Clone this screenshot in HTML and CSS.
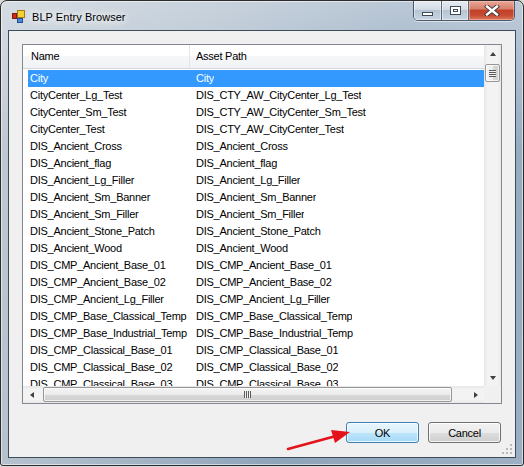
FILE: index.html
```html
<!DOCTYPE html>
<html>
<head>
<meta charset="utf-8">
<title>BLP Entry Browser</title>
<link rel="stylesheet" href="styles.css">
</head>
<body>
<div class="window">
  <div class="titlebar">
    <svg class="app-icon" width="15" height="14" viewBox="0 0 15 14">
      <rect x="1.5" y="3.5" width="4" height="5" fill="#d8261c" stroke="#7a1a12"/>
      <rect x="6.5" y="0.5" width="7" height="7" fill="#f7cf2e" stroke="#a07a10"/>
      <rect x="6.5" y="8.5" width="5" height="4" fill="#4f86d8" stroke="#1f4f9a"/>
    </svg>
    <span class="title">BLP Entry Browser</span>
    <div class="caption">
      <div class="cbtn min"><span class="min-glyph"></span></div>
      <div class="cbtn max"><span class="max-glyph"></span></div>
      <div class="cbtn close">
        <svg width="16" height="11" viewBox="0 0 16 11">
          <path d="M3 1.5 L13 9.5 M13 1.5 L3 9.5" stroke="#3a3a3a" stroke-width="4.2" stroke-linecap="square"/>
          <path d="M3 1.5 L13 9.5 M13 1.5 L3 9.5" stroke="#ffffff" stroke-width="2.4" stroke-linecap="square"/>
        </svg>
      </div>
    </div>
  </div>
  <div class="client">
    <div class="listview">
      <div class="lv-main">
        <div class="lv-header">
          <div class="hcol hc1">Name</div>
          <div class="hcol hc2">Asset Path</div>
        </div>
        <div class="lv-rows">
          <div class="row selected"><span class="c1">City</span><span class="c2">City</span></div>
          <div class="row"><span class="c1">CityCenter_Lg_Test</span><span class="c2">DIS_CTY_AW_CityCenter_Lg_Test</span></div>
          <div class="row"><span class="c1">CityCenter_Sm_Test</span><span class="c2">DIS_CTY_AW_CityCenter_Sm_Test</span></div>
          <div class="row"><span class="c1">CityCenter_Test</span><span class="c2">DIS_CTY_AW_CityCenter_Test</span></div>
          <div class="row"><span class="c1">DIS_Ancient_Cross</span><span class="c2">DIS_Ancient_Cross</span></div>
          <div class="row"><span class="c1">DIS_Ancient_flag</span><span class="c2">DIS_Ancient_flag</span></div>
          <div class="row"><span class="c1">DIS_Ancient_Lg_Filler</span><span class="c2">DIS_Ancient_Lg_Filler</span></div>
          <div class="row"><span class="c1">DIS_Ancient_Sm_Banner</span><span class="c2">DIS_Ancient_Sm_Banner</span></div>
          <div class="row"><span class="c1">DIS_Ancient_Sm_Filler</span><span class="c2">DIS_Ancient_Sm_Filler</span></div>
          <div class="row"><span class="c1">DIS_Ancient_Stone_Patch</span><span class="c2">DIS_Ancient_Stone_Patch</span></div>
          <div class="row"><span class="c1">DIS_Ancient_Wood</span><span class="c2">DIS_Ancient_Wood</span></div>
          <div class="row"><span class="c1">DIS_CMP_Ancient_Base_01</span><span class="c2">DIS_CMP_Ancient_Base_01</span></div>
          <div class="row"><span class="c1">DIS_CMP_Ancient_Base_02</span><span class="c2">DIS_CMP_Ancient_Base_02</span></div>
          <div class="row"><span class="c1">DIS_CMP_Ancient_Lg_Filler</span><span class="c2">DIS_CMP_Ancient_Lg_Filler</span></div>
          <div class="row"><span class="c1">DIS_CMP_Base_Classical_Temp</span><span class="c2">DIS_CMP_Base_Classical_Temp</span></div>
          <div class="row"><span class="c1">DIS_CMP_Base_Industrial_Temp</span><span class="c2">DIS_CMP_Base_Industrial_Temp</span></div>
          <div class="row"><span class="c1">DIS_CMP_Classical_Base_01</span><span class="c2">DIS_CMP_Classical_Base_01</span></div>
          <div class="row"><span class="c1">DIS_CMP_Classical_Base_02</span><span class="c2">DIS_CMP_Classical_Base_02</span></div>
          <div class="row"><span class="c1">DIS_CMP_Classical_Base_03</span><span class="c2">DIS_CMP_Classical_Base_03</span></div>
        </div>
      </div>
      <div class="vscroll">
        <div class="sbtn"><span class="tri up"></span></div>
        <div class="vthumb"><span class="vgrip"></span></div>
        <div class="vtrack"></div>
        <div class="sbtn"><span class="tri down"></span></div>
      </div>
      <div class="hscroll">
        <div class="sbtn"><span class="tri left"></span></div>
        <div class="hthumb"><span class="hgrip"></span></div>
        <div class="htrack"></div>
        <div class="sbtn"><span class="tri right"></span></div>
      </div>
      <div class="corner"></div>
    </div>
    <div class="buttons">
      <button class="btn ok">OK</button>
      <button class="btn">Cancel</button>
    </div>
    <svg class="arrow" width="90" height="36" viewBox="0 0 90 36">
      <path d="M18 27 L66 14" stroke="#e4121b" stroke-width="2.6" stroke-linecap="round"/>
      <polygon points="80,10 61,8 65,21" fill="#e4121b"/>
    </svg>
    <svg class="grip" width="11" height="11" viewBox="0 0 11 11">
      <g fill="#b9b9b9">
        <rect x="8" y="0" width="2" height="2"/>
        <rect x="4" y="4" width="2" height="2"/>
        <rect x="8" y="4" width="2" height="2"/>
        <rect x="0" y="8" width="2" height="2"/>
        <rect x="4" y="8" width="2" height="2"/>
        <rect x="8" y="8" width="2" height="2"/>
      </g>
    </svg>
  </div>
</div>
</body>
</html>
```

FILE: styles.css
```css
* { box-sizing: border-box; }
html, body { margin: 0; padding: 0; }
body {
  width: 524px;
  height: 467px;
  overflow: hidden;
  background: #d9d9d9;
  font-family: "Liberation Sans", Arial, sans-serif;
  font-size: 11px;
  color: #000;
}

.window {
  width: 524px;
  height: 466px;
  border: 1px solid #2c2c2c;
  border-radius: 7px 7px 3px 3px;
  background:
    linear-gradient(to bottom, rgba(230, 236, 242, 0.5) 0, rgba(230, 236, 242, 0) 150px),
    linear-gradient(105deg, #c4ccd5 0%, #adbbc9 30%, #8ea4bb 62%, #9cafc3 100%);
  box-shadow: inset 0 0 0 1px rgba(255, 255, 255, 0.55);
  display: flex;
  flex-direction: column;
}

/* Title bar */
.titlebar {
  height: 29px;
  display: flex;
  align-items: center;
  padding-left: 10px;
}
.app-icon { flex: none; margin-top: 2px; }
.title {
  margin-left: 6px;
  margin-top: 2px;
  font-size: 11px;
  letter-spacing: 0.05px;
  color: #000;
  text-shadow: 0 0 6px #fff, 0 0 10px #fff, 0 0 14px rgba(255, 255, 255, 0.9);
}
.caption {
  margin-left: auto;
  margin-right: 8px;
  align-self: flex-start;
  display: flex;
  height: 20px;
  border: 1px solid #4a5a6c;
  border-top: none;
  border-radius: 0 0 5px 5px;
  overflow: hidden;
  box-shadow: 0 1px 0 rgba(255, 255, 255, 0.5);
}
.cbtn {
  display: flex;
  align-items: center;
  justify-content: center;
  height: 100%;
}
.cbtn.min, .cbtn.max {
  background: linear-gradient(to bottom, #e6ebf1 0%, #d2dbe5 45%, #b6c4d3 50%, #c8d4e0 100%);
  border-right: 1px solid #5a6a7c;
  box-shadow: inset 0 0 0 1px rgba(255, 255, 255, 0.45);
}
.cbtn.min { width: 28px; }
.cbtn.max { width: 27px; }
.cbtn.close {
  width: 45px;
  background: linear-gradient(to bottom, #e8a797 0%, #d9806b 40%, #c2412a 50%, #c74a30 75%, #dd7a5e 100%);
  box-shadow: inset 0 0 0 1px rgba(255, 210, 200, 0.45);
}
.min-glyph {
  width: 11px;
  height: 4px;
  margin-top: 6px;
  background: #fff;
  border: 1px solid #3e4a58;
}
.max-glyph {
  width: 11px;
  height: 9px;
  border: 1px solid #3e4a58;
  background: #fff;
  box-shadow: inset 0 0 0 2px #fff, inset 0 0 0 3px #3e4a58;
}

/* Client */
.client {
  flex: 1;
  margin: 0 7px 7px 7px;
  border: 1px solid #3e4b59;
  background: #f0f0f0;
  padding: 13px 13px 0 13px;
  position: relative;
  display: flex;
  flex-direction: column;
}

.listview {
  height: 360px;
  border: 1px solid #828790;
  background: #fff;
  display: grid;
  grid-template-columns: 1fr 17px;
  grid-template-rows: 1fr 17px;
}
.lv-main {
  overflow: hidden;
  min-width: 0;
  min-height: 0;
}
.lv-header {
  height: 24px;
  display: flex;
  background: linear-gradient(to bottom, #ffffff 0%, #ffffff 45%, #f6f7f9 50%, #f1f2f4 100%);
  border-bottom: 1px solid #d5d5d5;
}
.hcol {
  line-height: 23px;
  letter-spacing: -0.25px;
  white-space: nowrap;
}
.hc1 {
  width: 167px;
  padding-left: 8px;
  border-right: 1px solid #e2e5ea;
}
.hc2 { padding-left: 6px; }

.lv-rows { padding-top: 1px; }
.row {
  display: flex;
  height: 17px;
  line-height: 17px;
  margin-left: 5px;
  white-space: nowrap;
  letter-spacing: -0.25px;
}
.row.selected {
  background: #3399ff;
  color: #fff;
}
.c1 {
  width: 162px;
  padding-left: 2px;
  overflow: hidden;
  flex: none;
}
.c2 {
  padding-left: 6px;
  overflow: hidden;
}

/* Scrollbars */
.vscroll {
  display: flex;
  flex-direction: column;
  background: linear-gradient(to right, #e6e6e6 0%, #f3f3f3 20%, #f3f3f3 80%, #e9e9e9 100%);
}
.hscroll {
  display: flex;
  background: linear-gradient(to bottom, #e6e6e6 0%, #f3f3f3 20%, #f3f3f3 80%, #e9e9e9 100%);
}
.corner { background: #f0f0f0; }
.sbtn {
  width: 17px;
  height: 17px;
  flex: none;
  display: flex;
  align-items: center;
  justify-content: center;
}
.vtrack, .htrack { flex: 1; }
.tri { width: 0; height: 0; border-style: solid; }
.tri.up { border-width: 0 3.5px 4px 3.5px; border-color: transparent transparent #404040 transparent; }
.tri.down { border-width: 4px 3.5px 0 3.5px; border-color: #404040 transparent transparent transparent; }
.tri.left { border-width: 3.5px 4px 3.5px 0; border-color: transparent #404040 transparent transparent; }
.tri.right { border-width: 3.5px 0 3.5px 4px; border-color: transparent transparent transparent #404040; }

.vthumb {
  margin: 2px 1px 0 1px;
  height: 18px;
  flex: none;
  border: 1px solid #979797;
  border-radius: 2px;
  background: linear-gradient(to right, #f4f4f4 0%, #ececec 50%, #d8d8d8 51%, #cfcfcf 100%);
  box-shadow: inset 0 0 0 1px rgba(255, 255, 255, 0.7);
  display: flex;
  align-items: center;
  justify-content: center;
}
.vgrip {
  width: 7px;
  height: 7px;
  background: repeating-linear-gradient(to bottom, #5c5c5c 0, #5c5c5c 1px, #f0f0f0 1px, #f0f0f0 2px);
}
.hthumb {
  margin: 1px 0 1px 3px;
  width: 409px;
  flex: none;
  border: 1px solid #979797;
  border-radius: 2px;
  background: linear-gradient(to bottom, #f4f4f4 0%, #ececec 50%, #d8d8d8 51%, #cfcfcf 100%);
  box-shadow: inset 0 0 0 1px rgba(255, 255, 255, 0.7);
  display: flex;
  align-items: center;
  justify-content: center;
}
.hgrip {
  width: 7px;
  height: 7px;
  background: repeating-linear-gradient(to right, #5c5c5c 0, #5c5c5c 1px, #f0f0f0 1px, #f0f0f0 2px);
}

/* Dialog buttons */
.buttons {
  margin-top: 18px;
  padding-right: 1px;
  display: flex;
  justify-content: flex-end;
  gap: 9px;
}
.btn {
  width: 73px;
  height: 21px;
  padding: 0;
  font-family: "Liberation Sans", Arial, sans-serif;
  font-size: 11px;
  letter-spacing: -0.25px;
  color: #000;
  border: 1px solid #707070;
  border-radius: 3px;
  background: linear-gradient(to bottom, #f2f2f2 0%, #ebebeb 50%, #dddddd 51%, #cfcfcf 100%);
  box-shadow: inset 0 0 0 1px rgba(255, 255, 255, 0.8);
}
.btn.ok {
  border-color: #3c7fb1;
  background: linear-gradient(to bottom, #eaf6fd 0%, #d9f0fc 50%, #bee6fd 51%, #a7d9f5 100%);
  box-shadow: inset 0 0 0 1px rgba(255, 255, 255, 0.75);
}

.arrow {
  position: absolute;
  left: 261px;
  top: 391px;
}
.grip {
  position: absolute;
  right: 2px;
  bottom: 2px;
}
```
